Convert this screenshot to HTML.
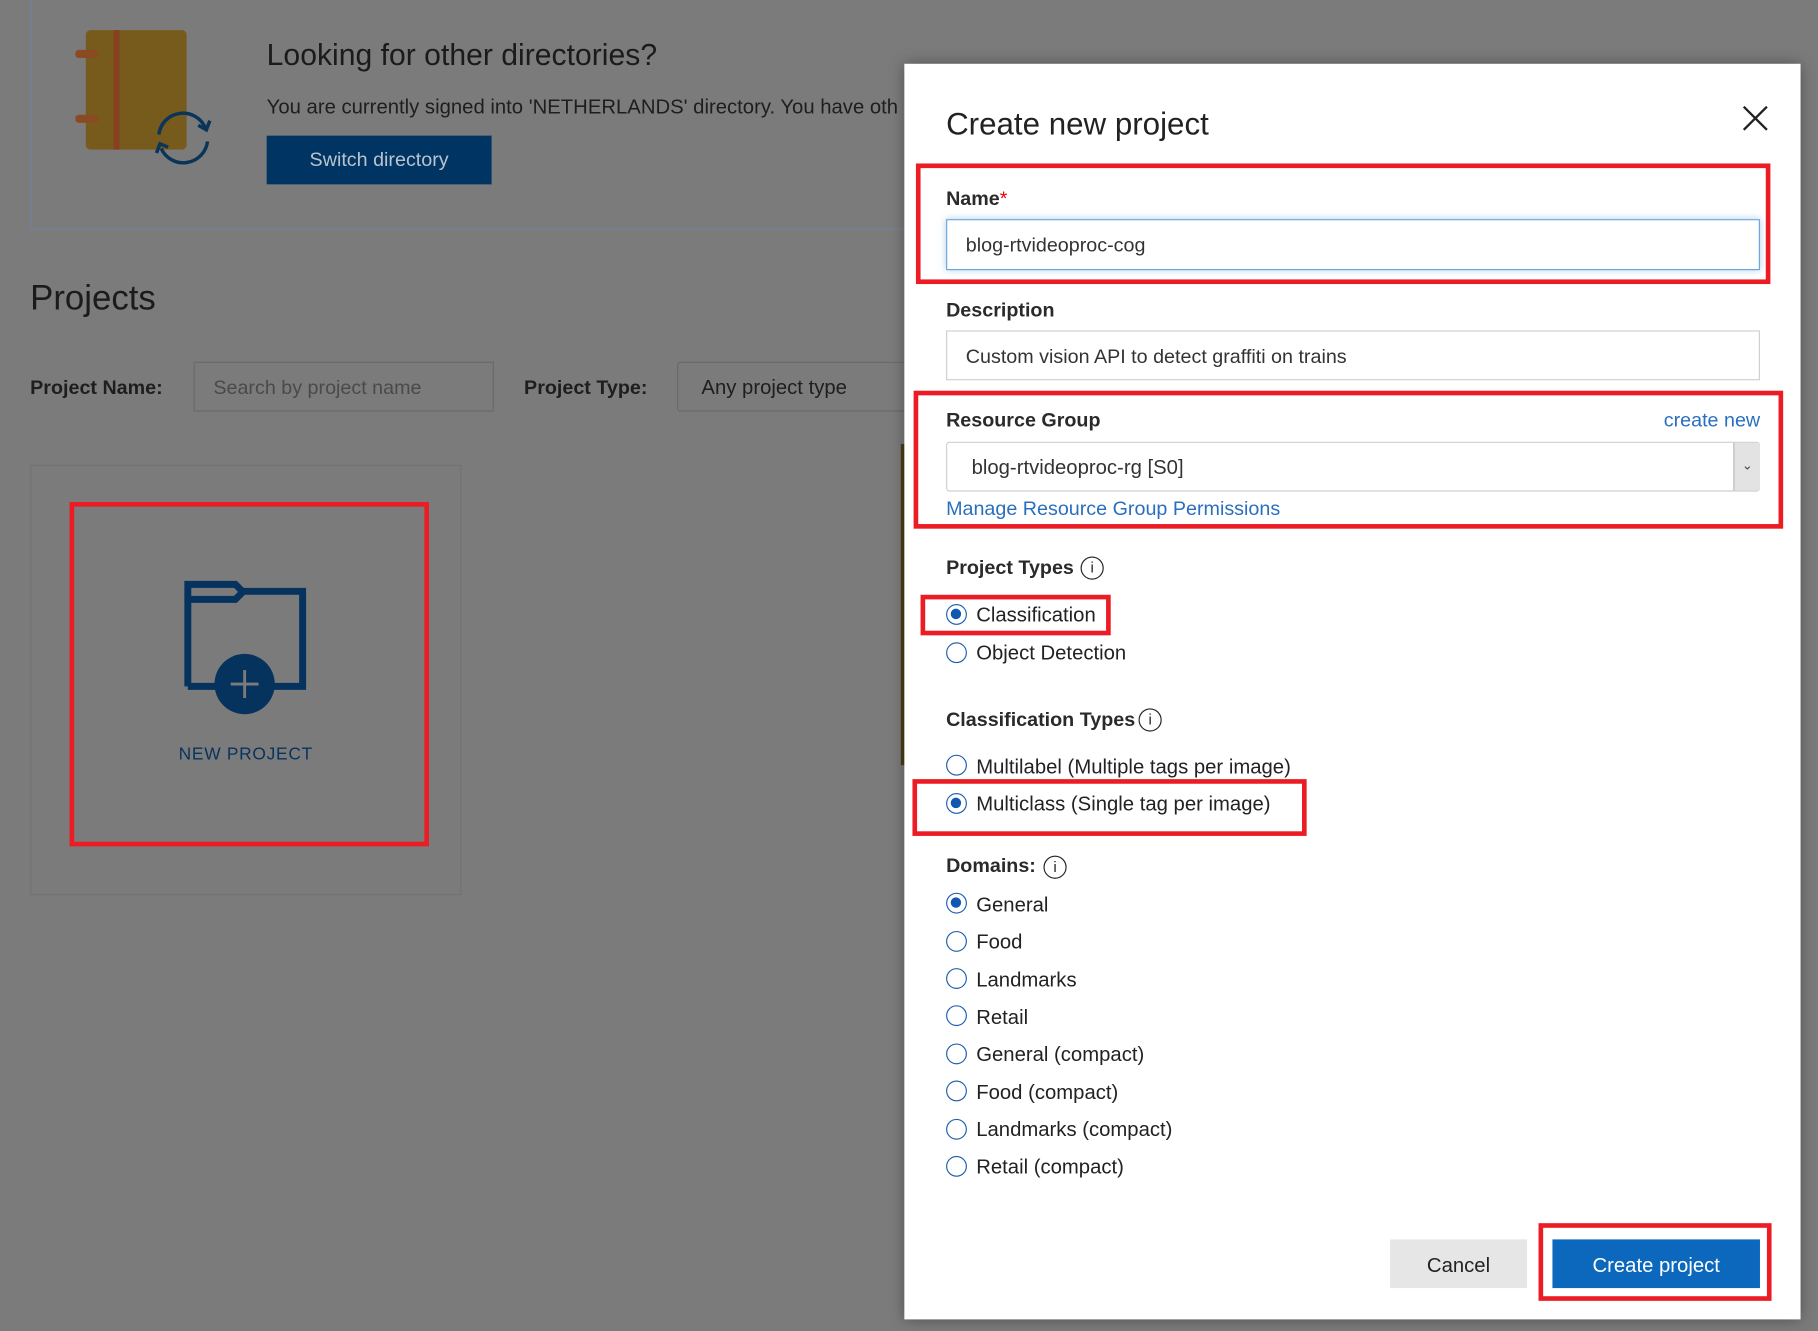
<!DOCTYPE html>
<html><head><meta charset="utf-8"><style>
html,body{margin:0;padding:0;width:1818px;height:1331px;overflow:hidden;background:#7b7b7b;}
#w{position:absolute;left:0;top:0;width:1568px;height:1148px;transform:scale(1.1594);transform-origin:0 0;font-family:"Liberation Sans",sans-serif;}
.a{position:absolute;white-space:nowrap;}
.red{position:absolute;border:4px solid #ec1c24;box-sizing:border-box;}
.rad{position:absolute;width:18px;height:18px;border:1.5px solid #1f5fae;border-radius:50%;box-sizing:border-box;background:#fff;}
.rad.on::after{content:"";position:absolute;left:3px;top:3px;width:9px;height:9px;border-radius:50%;background:#1058b0;}
.rl{position:absolute;font-size:17.5px;color:#222;line-height:20px;white-space:nowrap;}
.lbl{position:absolute;font-size:17px;font-weight:bold;color:#2a2a2a;line-height:20px;white-space:nowrap;}
.info{position:absolute;width:20px;height:20px;border:1.5px solid #222;border-radius:50%;box-sizing:border-box;font-size:13px;text-align:center;line-height:17px;color:#222;}
</style></head><body><div id="w">
<div style="position:absolute;left:26px;top:-2px;width:800px;height:200px;border:1px solid #71849a;border-top:none;border-right:none;box-sizing:border-box;"></div>
<div style="position:absolute;left:74px;top:26px;width:87px;height:103px;background:#765b1c;border-radius:4px;"></div>
<div style="position:absolute;left:98px;top:26px;width:5px;height:103px;background:#8a4020;"></div>
<div style="position:absolute;left:65px;top:43px;width:20px;height:7px;background:#8a4a22;border-radius:3px;"></div>
<div style="position:absolute;left:65px;top:99px;width:20px;height:7px;background:#8a4a22;border-radius:3px;"></div>
<svg class="a" style="left:130px;top:90px" width="56" height="56" viewBox="0 0 56 56"><path d="M7 26 A21 21 0 0 1 47 20" fill="none" stroke="#0b3558" stroke-width="3"/><path d="M41 18 L48 22 L51 14" fill="none" stroke="#0b3558" stroke-width="3"/><path d="M49 32 A21 21 0 0 1 9 38" fill="none" stroke="#0b3558" stroke-width="3"/><path d="M5 42 L8 34 L15 37" fill="none" stroke="#0b3558" stroke-width="3"/></svg>
<div class="a" style="left:230px;top:32px;font-size:26px;color:#1b1b1b;">Looking for other directories?</div>
<div class="a" style="left:230px;top:82px;font-size:17.5px;color:#1e1e1e;">You are currently signed into 'NETHERLANDS' directory. You have oth</div>
<div class="a" style="left:230px;top:117px;width:194px;height:42px;background:#003462;color:#b9c3ce;font-size:17px;line-height:42px;text-align:center;">Switch directory</div>
<div class="a" style="left:26px;top:241px;font-size:30px;color:#1b1b1b;">Projects</div>
<div class="a" style="left:26px;top:325px;font-size:17px;font-weight:bold;color:#1e1e1e;">Project Name:</div>
<div class="a" style="left:167px;top:312px;width:259px;height:43px;border:1px solid #6a6a6a;box-sizing:border-box;font-size:17px;color:#4a4a4a;line-height:43px;padding-left:16px;">Search by project name</div>
<div class="a" style="left:452px;top:325px;font-size:17px;font-weight:bold;color:#1e1e1e;">Project Type:</div>
<div class="a" style="left:584px;top:312px;width:220px;height:43px;border:1px solid #6a6a6a;border-radius:3px;box-sizing:border-box;font-size:17.5px;color:#1e1e1e;line-height:43px;padding-left:20px;">Any project type</div>
<div style="position:absolute;left:777px;top:383px;width:4px;height:277px;background:#4a3e14;"></div>
<div style="position:absolute;left:26px;top:401px;width:372px;height:371px;border:1px solid #727272;box-sizing:border-box;"></div>
<div class="red" style="left:60px;top:433px;width:310px;height:297px;"></div>
<svg class="a" style="left:155px;top:498px" width="115" height="120" viewBox="0 0 115 120"><path d="M7 94 V6 H48 L54 12 H106 V94 H80 M32 94 H7" fill="none" stroke="#06335e" stroke-width="6"/><path d="M7 19 H48 L54 13" fill="none" stroke="#06335e" stroke-width="6"/><circle cx="56" cy="92" r="26" fill="#06335e"/><path d="M56 80 V104 M44 92 H68" stroke="#7b7b7b" stroke-width="2.5"/></svg>
<div class="a" style="left:130px;top:642px;width:164px;text-align:center;font-size:15px;letter-spacing:0.6px;color:#06335e;">NEW PROJECT</div>
<div style="position:absolute;left:780px;top:55px;width:773px;height:1083px;background:#fff;box-shadow:0 0 12px rgba(0,0,0,.35);"></div>
<div class="a" style="left:816px;top:92px;font-size:27px;color:#222;">Create new project</div>
<svg class="a" style="left:1502px;top:90px" width="24" height="24"><path d="M2 2 L22 22 M22 2 L2 22" stroke="#222" stroke-width="2"/></svg>
<div class="red" style="left:790px;top:141px;width:737px;height:104px;"></div>
<div class="lbl" style="left:816px;top:162px;">Name<span style="color:#e00;font-weight:normal">*</span></div>
<div class="a" style="left:816px;top:189px;width:702px;height:44px;border:1px solid #6aa6dc;box-shadow:0 0 6px rgba(100,160,220,.5);box-sizing:border-box;font-size:17px;color:#333;line-height:44px;padding-left:16px;">blog-rtvideoproc-cog</div>
<div class="lbl" style="left:816px;top:258px;">Description</div>
<div class="a" style="left:816px;top:285px;width:702px;height:43px;border:1px solid #cfcfcf;box-sizing:border-box;font-size:17px;color:#333;line-height:43px;padding-left:16px;">Custom vision API to detect graffiti on trains</div>
<div class="red" style="left:788px;top:337px;width:750px;height:119px;"></div>
<div class="lbl" style="left:816px;top:353px;">Resource Group</div>
<div class="a" style="left:1435px;top:353px;font-size:17px;color:#2a6fbf;line-height:20px;">create new</div>
<div class="a" style="left:816px;top:381px;width:702px;height:43px;border:1px solid #cfcfcf;border-radius:3px;box-sizing:border-box;font-size:17.5px;color:#333;line-height:43px;padding-left:21px;">blog-rtvideoproc-rg [S0]</div>
<div class="a" style="left:1495px;top:382px;width:22px;height:41px;background:#e3e3e3;border-left:1px solid #bbb;font-size:11px;text-align:center;line-height:41px;color:#444;">&#8964;</div>
<div class="a" style="left:816px;top:429px;font-size:17px;color:#2a6fbf;line-height:20px;">Manage Resource Group Permissions</div>
<div class="lbl" style="left:816px;top:480px;">Project Types</div>
<div class="info" style="left:932px;top:480px;">i</div>
<div class="red" style="left:794px;top:513px;width:164px;height:35px;"></div>
<div class="rad on" style="left:816px;top:521px;"></div><div class="rl" style="left:842px;top:520px;">Classification</div>
<div class="rad" style="left:816px;top:554px;"></div><div class="rl" style="left:842px;top:553px;">Object Detection</div>
<div class="lbl" style="left:816px;top:611px;">Classification Types</div>
<div class="info" style="left:982px;top:611px;">i</div>
<div class="rad" style="left:816px;top:651px;"></div><div class="rl" style="left:842px;top:651px;">Multilabel (Multiple tags per image)</div>
<div class="red" style="left:787px;top:672px;width:340px;height:49px;"></div>
<div class="rad on" style="left:816px;top:684px;"></div><div class="rl" style="left:842px;top:683px;">Multiclass (Single tag per image)</div>
<div class="lbl" style="left:816px;top:737px;">Domains:</div>
<div class="info" style="left:900px;top:738px;">i</div>
<div class="rad on" style="left:816px;top:770px;"></div><div class="rl" style="left:842px;top:770px;">General</div>
<div class="rad" style="left:816px;top:803px;"></div><div class="rl" style="left:842px;top:802px;">Food</div>
<div class="rad" style="left:816px;top:835px;"></div><div class="rl" style="left:842px;top:835px;">Landmarks</div>
<div class="rad" style="left:816px;top:867px;"></div><div class="rl" style="left:842px;top:867px;">Retail</div>
<div class="rad" style="left:816px;top:900px;"></div><div class="rl" style="left:842px;top:899px;">General (compact)</div>
<div class="rad" style="left:816px;top:932px;"></div><div class="rl" style="left:842px;top:932px;">Food (compact)</div>
<div class="rad" style="left:816px;top:965px;"></div><div class="rl" style="left:842px;top:964px;">Landmarks (compact)</div>
<div class="rad" style="left:816px;top:997px;"></div><div class="rl" style="left:842px;top:996px;">Retail (compact)</div>
<div class="a" style="left:1199px;top:1069px;width:118px;height:42px;background:#e6e6e6;font-size:17.5px;color:#222;line-height:44px;text-align:center;">Cancel</div>
<div class="red" style="left:1327px;top:1055px;width:201px;height:67px;"></div>
<div class="a" style="left:1339px;top:1069px;width:179px;height:42px;background:#0b68bd;font-size:17.5px;color:#fff;line-height:44px;text-align:center;">Create project</div>
</div></body></html>
